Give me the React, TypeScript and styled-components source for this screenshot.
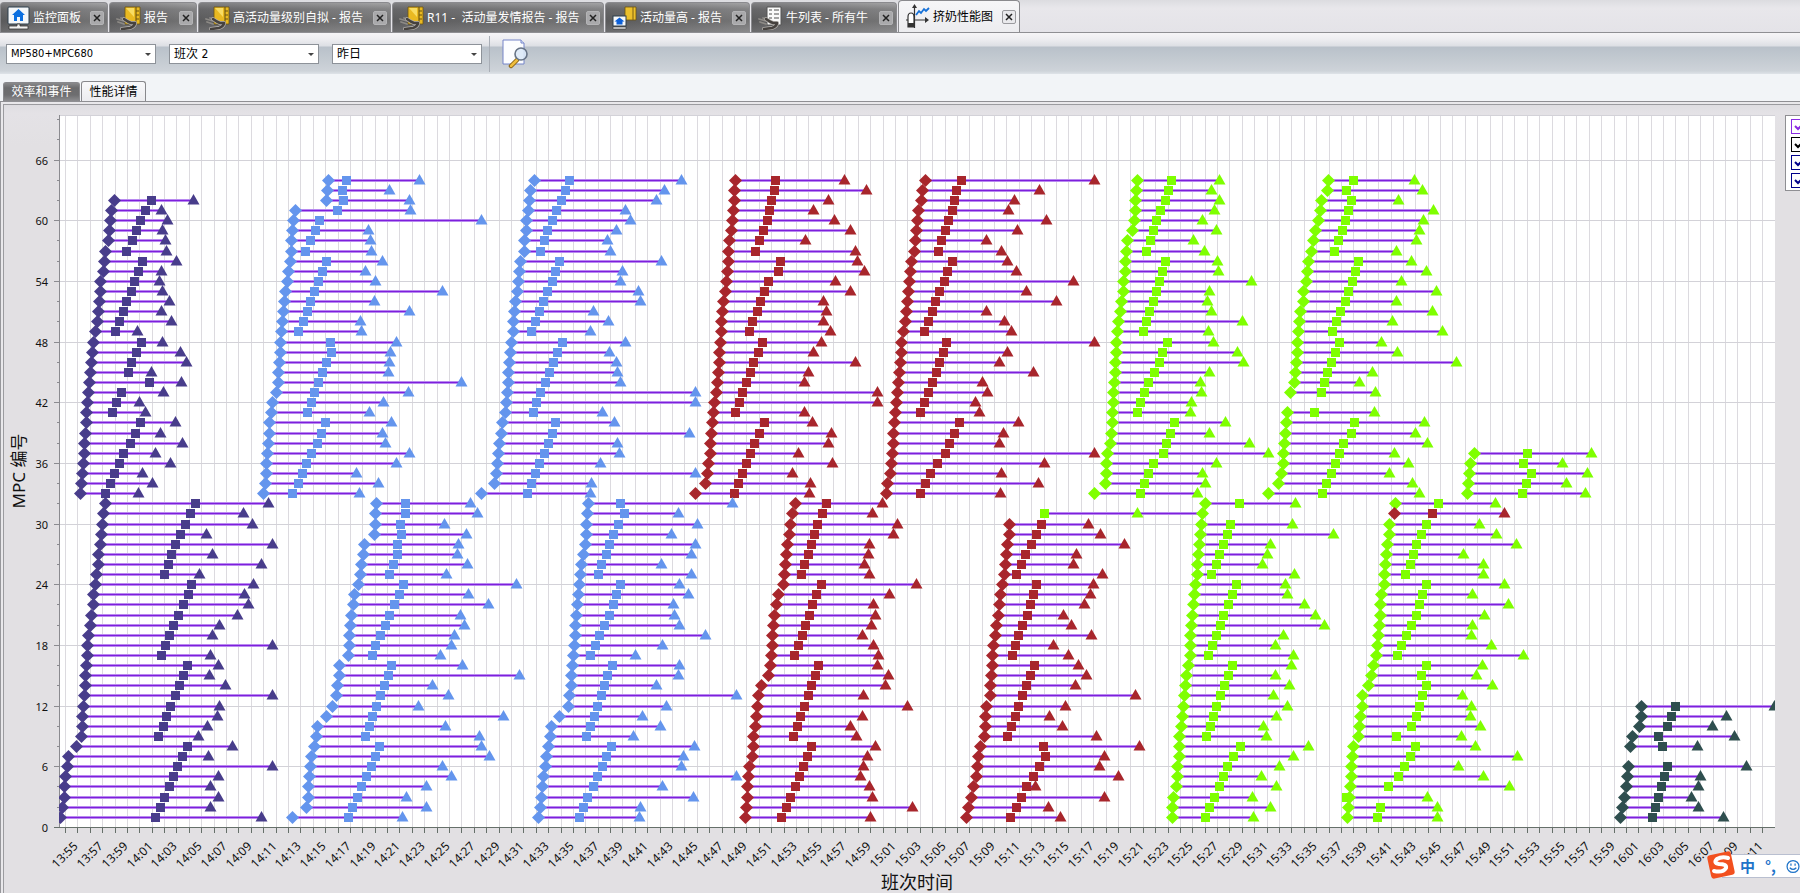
import React from 'react';
import styled, { createGlobalStyle, css } from 'styled-components';

const UI_FONT = '"Noto Sans", "Noto Sans CJK SC", sans-serif';

const GlobalStyle = createGlobalStyle`
  * { box-sizing: border-box; }
  body {
    margin: 0;
    background: #e2e0e3;
    font-family: ${UI_FONT};
    font-size: 12px;
    overflow-x: hidden;
  }
`;

/* ---------- chart data ---------- */

type Row = [number, number, number] | null;

interface Batch {
  color: string;
  origin: number;
  unit: number;
  top: number;
  rows: Row[];
}

const NAVY = '#483d8b';
const BLUE = '#6495ed';
const RED = '#a8262c';
const LIME = '#7fff00';
const SLATE = '#2f4f4f';

// Each entry is "start attach end", listed from the highest stall number down; "-" marks an empty stall.
const batch = (color: string, origin: number, unit: number, top: number, text: string): Batch => ({
  color,
  origin,
  unit,
  top,
  rows: text
    .trim()
    .split(/\s*,\s*/)
    .map((item) => (item === '-' ? null : (item.split(' ').map(Number) as [number, number, number]))),
});

const BATCHES: Batch[] = [
  batch(NAVY, 0, 3, 62, `343 455 581,335 437 484,332 421 502,329 409 488,325 397 497,316 379 499,314 427 530,311 415 484,
    301 403 478,301 394 488,298 379 508,295 370 484,292 358 514,286 347 412,280 424 488,277 409 542,274 394 560,271 385 454,
    268 448 544,265 364 490,262 349 418,259 337 436,259 421 526,256 406 482,253 391 547,252 370 466,250 358 512,247 343 427,
    244 331 457,241 316 415`),
  batch(BLUE, 0, 3, 64, `986 1040 1259,981 1027 1168,979 1031 1229,886 1012 1232,879 958 1445,877 946 1105,875 931 1111,875 916 1115,
    870 979 1147,865 967 1096,862 955 1126,856 943 1327,853 931 1123,849 922 1229,847 910 1081,845 895 1084,841 991 1189,
    841 994 1171,838 979 1168,836 967 1165,834 955 1384,829 943 1225,818 934 1150,814 922 1108,809 976 1174,808 964 1147,
    806 952 1156,803 934 1229,800 919 1189,799 907 1069,796 895 1135,791 877 1078`),
  batch(BLUE, 450, 3, 64, `254 358 694,241 346 643,238 334 619,236 319 526,230 307 541,228 292 499,223 283 472,223 271 481,
    211 328 634,208 316 517,205 307 511,203 292 565,197 280 571,193 268 430,190 256 475,190 244 421,183 337 526,180 322 478,
    178 310 499,176 298 502,175 286 511,172 271 736,169 259 736,167 250 457,156 316 493,154 307 718,148 295 502,145 283 508,
    142 268 451,139 256 736,133 244 424,95 232 421`),
  batch(RED, 450, 3, 64, `856 976 1183,854 973 1249,853 964 1135,851 958 1090,848 952 1153,845 940 1201,839 928 1066,836 916 1216,
    836 991 1222,832 985 1243,829 955 1156,826 943 1201,820 931 1120,816 922 1129,814 907 1120,814 898 1141,812 937 1114,
    809 925 1090,808 910 1216,805 901 1075,802 889 1063,799 877 1282,793 868 1282,790 856 1063,788 943 1087,785 928 1144,
    782 913 1135,781 901 1045,775 889 1147,772 877 1027,767 865 1081,736 853 1078`),
  batch(RED, 850, 3, 64, `226 334 733,217 319 568,214 313 493,205 307 475,202 295 589,198 286 502,195 274 409,192 265 454,
    183 307 472,181 292 499,178 283 670,175 268 529,171 256 619,169 247 409,166 235 463,159 223 484,154 289 733,153 280 472,
    151 268 448,148 259 550,145 247 397,142 235 412,139 223 376,136 211 388,133 328 505,130 313 460,129 298 448,126 286 733,
    124 262 583,121 241 454,112 226 565,109 211 451`),
  batch(LIME, 850, 3, 64, `862 964 1108,858 955 1084,856 946 1108,855 931 1093,853 919 1057,847 910 1099,832 901 1030,829 889 1063,
    827 946 1103,826 937 1105,821 928 1204,820 919 1078,814 910 1072,811 898 1084,804 889 1177,802 880 1075,800 952 1090,
    798 937 1162,796 928 1180,795 913 1078,793 895 1051,790 883 1054,790 871 1024,787 862 1021,787 973 1126,785 961 1078,
    781 949 1198,772 940 1255,769 910 1099,768 895 1057,766 883 1066,733 871 1042`),
  batch(LIME, 1250, 2.851, 64, `223 295 469,221 275 491,203 289 423,200 281 523,195 272 494,187 264 483,181 252 474,175 240 417,
    168 309 460,163 301 503,161 292 432,152 281 532,152 272 417,143 258 520,141 246 406,138 235 549,136 255 375,135 244 420,
    133 232 589,130 221 349,127 212 312,115 204 357,-,106 184 355,104 298 497,101 289 471,98 266 506,95 255 412,95 244 451,
    90 232 397,82 218 463,52 206 483`),
  batch(LIME, 1250, 2.851, 37, `640 791 974,628 780 891,626 802 962,623 788 902,620 777 956`),
  batch(NAVY, 0, 3, 32, `317 587 805,311 571 731,308 556 758,305 541 619,302 526 817,296 514 637,295 505 785,290 493 598,
    287 574 761,281 565 733,281 550 745,275 535 713,271 520 658,266 508 637,263 496 817,262 484 631,260 562 655,257 550 628,
    256 538 677,254 526 817,251 511 658,248 499 652,248 490 622,245 475 595,229 562 697,206 547 625,203 532 817,196 520 655,
    194 508 631,192 493 655,188 481 631,181 466 785`),
  batch(BLUE, 0, 3, 32, `1130 1216 1412,1127 1216 1433,1125 1201 1333,1123 1204 1399,1093 1192 1376,1090 1192 1372,1084 1180 1402,
    1082 1168 1340,1075 1211 1549,1064 1198 1406,1061 1183 1466,1054 1168 1382,1051 1156 1394,1048 1141 1363,1048 1126 1353,
    1046 1118 1321,1018 1174 1388,1017 1165 1559,1013 1153 1297,1009 1141 1346,997 1129 1255,979 1118 1511,952 1108 1337,
    949 1096 1438,943 1138 1445,935 1126 1469,932 1114 1327,928 1099 1355,926 1084 1279,924 1073 1219,919 1057 1279,878 1045 1207`),
  batch(BLUE, 450, 3, 32, `416 511 848,413 523 685,410 505 742,408 490 665,407 478 737,401 469 725,394 454 634,391 445 725,
    389 511 688,386 499 715,381 490 671,379 478 673,376 463 688,375 448 767,374 436 637,371 421 556,367 487 688,365 472 685,
    364 463 619,359 454 860,355 443 650,328 433 577,305 421 631,302 409 550,296 484 733,290 469 700,287 457 694,281 442 860,
    278 430 637,275 412 731,271 400 571,265 388 568`),
  batch(RED, 450, 3, 32, `1036 1129 1298,1027 1118 1267,1021 1102 1342,1018 1093 1330,1012 1084 1258,1010 1075 1256,1007 1063 1243,
    1003 1054 1258,1000 1114 1400,985 1099 1318,979 1087 1270,974 1078 1276,970 1066 1264,968 1057 1237,967 1045 1270,
    964 1033 1286,962 1105 1282,956 1096 1315,934 1084 1306,926 1075 1240,923 1063 1372,920 1051 1237,917 1042 1202,
    911 1030 1219,910 1084 1276,907 1072 1252,899 1060 1241,896 1048 1231,893 1036 1258,893 1021 1267,889 1009 1387,886 994 1261`),
  batch(RED, 850, 3, 30, `479 574 715,477 559 752,473 544 823,470 526 679,467 514 671,463 499 757,457 559 731,451 550 721,
    449 541 704,446 532 641,440 517 665,436 505 725,431 496 610,428 487 655,427 553 685,425 541 710,422 529 676,420 517 856,
    410 505 646,406 496 598,406 484 637,403 472 739,392 580 868,386 586 763,382 568 748,378 550 805,371 529 557,364 514 763,
    355 499 595,349 481 631`),
  batch(LIME, 850, 3, 32, `1067 1168 1336,1056 583 862,1054 1141 1327,1052 1132 1450,1049 1120 1262,1046 1108 1252,1043 1099 1238,
    1042 1084 1333,1036 1159 1306,1033 1147 1312,1030 1135 1363,1027 1120 1397,1024 1111 1423,1021 1099 1300,1021 1087 1276,
    1020 1075 1330,1016 1147 1325,1010 1135 1276,1007 1123 1319,1004 1111 1271,1001 1099 1312,997 1090 1279,994 1081 1241,
    989 1069 1249,989 1171 1376,987 1150 1331,983 1132 1288,982 1120 1235,980 1108 1279,971 1093 1208,968 1078 1262,967 1066 1210`),
  batch(LIME, 1250, 2.851, 32, `414 537 700,-,398 503 655,397 489 702,392 475 760,389 466 608,386 457 666,384 443 666,383 503 726,
    375 492 634,372 483 737,372 475 669,369 460 634,366 446 631,364 432 688,361 420 780,352 503 663,345 489 645,338 503 691,
    321 492 605,320 483 631,316 475 629,313 460 658,310 417 603,295 472 643,292 457 763,290 440 595,289 424 666,287 395 740,
    284 274 506,281 372 535,278 364 535`),
  batch(RED, 1250, 2.851, 31, `411 519 726`),
  batch(SLATE, 1250, 2.851, 12, `1116 1213 1495,1116 1202 1358,1110 1190 1318,1090 1164 1381,1084 1176 1275,-,1079 1190 1415,
    1077 1182 1284,1074 1173 1278,1069 1164 1258,1063 1156 1278,1056 1147 1350`),
];

const PLOT = { left: 59, right: 1775, top: 115, bottom: 827 };

const yOf = (value: number) => Math.floor(827.4 - (value * 91) / 9) + 0.5;
const minuteX = (i: number) => Math.floor(65.5 + i * 12.388) + 0.5;

const clock = (i: number) => {
  const total = 13 * 60 + 54 + i;
  return `${Math.floor(total / 60)}:${String(total % 60).padStart(2, '0')}`;
};

const MARKS = BATCHES.flatMap((b) =>
  b.rows.flatMap((row, i) => {
    if (!row) return [];
    const [start, attach, end] = row.map((v) => Math.floor(b.origin + v / b.unit) + 0.5);
    return [{ color: b.color, y: yOf(b.top - i), start, attach, end }];
  }),
);

const range = (n: number) => Array.from({ length: n }, (_, i) => i);

/* ---------- page structure ---------- */

const Page = styled.div`
  position: relative;
  min-height: 100vh;
  display: flex;
  flex-direction: column;
`;

const TabStrip = styled.nav`
  display: flex;
  align-items: flex-end;
  gap: 1px;
  height: 33px;
  background: linear-gradient(#dcdce0, #e8e7eb 8px, #e4e3e8);
  border-bottom: 1px solid #8f8f93;
  overflow: hidden;
`;

const Tab = styled.div<{ $active?: boolean; $width: number }>`
  display: flex;
  align-items: center;
  flex: 0 0 ${(p) => p.$width}px;
  height: ${(p) => (p.$active ? 32 : 30)}px;
  padding: 0 3px 0 6px;
  border: 1px solid #8a8a8e;
  border-bottom: 0;
  border-radius: 4px 4px 0 0;
  ${(p) =>
    p.$active
      ? css`
          background: linear-gradient(#f6f6f8, #ececef);
          color: #000;
        `
      : css`
          background: linear-gradient(90deg, rgba(60, 60, 62, 0.35), rgba(160, 160, 160, 0.2)),
            linear-gradient(#a4a4a6, #7d7d7f 6px, #6a6a6b 18px, #858587);
          color: #fff;
        `}
`;

const TabLabel = styled.button`
  display: flex;
  align-items: center;
  gap: 3px;
  flex: 1;
  min-width: 0;
  padding: 0;
  border: 0;
  background: none;
  color: inherit;
  font: 12px/18px ${UI_FONT};
  white-space: pre;
`;

const CloseButton = styled.button<{ $active?: boolean }>`
  display: grid;
  place-items: center;
  flex: none;
  width: 14px;
  height: 14px;
  padding: 0;
  border: 1px solid ${(p) => (p.$active ? '#9a9a9e' : '#b4b4b6')};
  border-radius: 2px;
  background: ${(p) => (p.$active ? '#e9e9ec' : '#a9a9ab')};
`;

const Toolbar = styled.div`
  display: flex;
  align-items: flex-start;
  height: 41px;
  padding: 3px 6px 0;
  background: linear-gradient(#f6f5f7, #eeeef1 6px, #dddfe4 13px, #b9c1ca 14px, #c3cad1 26px, #ced3d9 38px, #dfe3e8);
`;

const SelectBox = styled.div`
  position: relative;
  width: 150px;
  margin: 8px 13px 0 0;

  &::after {
    content: '';
    position: absolute;
    right: 5px;
    top: 9px;
    border: 3px solid transparent;
    border-top-color: #444;
    border-bottom: 0;
    pointer-events: none;
  }
`;

const Select = styled.select<{ $latin?: boolean }>`
  appearance: none;
  display: block;
  width: 100%;
  height: 20px;
  padding: 0 16px 0 4px;
  border: 1px solid #8d9299;
  border-radius: 0;
  background: #fff;
  color: #000;
  font: ${(p) => (p.$latin ? 11 : 12)}px/18px "DejaVu Sans Condensed", "Noto Sans CJK SC", sans-serif;
`;

const ToolbarDivider = styled.span`
  width: 1px;
  height: 36px;
  margin: 0 12px 0 -6px;
  background: #a9aeb6;
`;

const PreviewButton = styled.button`
  width: 30px;
  height: 32px;
  margin-top: 3px;
  padding: 0;
  border: 0;
  background: none;
`;

const SubTabStrip = styled.nav`
  display: flex;
  align-items: flex-end;
  gap: 1px;
  height: 28px;
  padding-left: 3px;
  background: #f2f4f7;
  border-bottom: 1px solid #8f8f93;
`;

const SubTab = styled.button<{ $active?: boolean; $width: number }>`
  width: ${(p) => p.$width}px;
  height: ${(p) => (p.$active ? 20 : 19)}px;
  padding: 0;
  border: 1px solid #88888c;
  border-bottom: 0;
  border-radius: 3px 3px 0 0;
  background: ${(p) =>
    p.$active ? 'linear-gradient(#f8f8fa, #ececef)' : 'linear-gradient(#8a8a8c, #6b6b6d 5px, #6e6e70 12px, #8d8d90)'};
  color: ${(p) => (p.$active ? '#000' : '#fff')};
  font: 12px/18px ${UI_FONT};
`;

const ChartFrame = styled.main`
  flex: 1;
  padding: 2px 0 0 2px;
  border-left: 1px solid #97979b;
  background: #e9e8eb;
`;

const ChartPanel = styled.div`
  display: flex;
  align-items: flex-start;
  border: solid #9b9b9f;
  border-width: 1px 0 0 1px;
  background: linear-gradient(#dedde1, #e4e2e6 8px, #e2e0e3 40px);
  overflow: hidden;
`;

const ChartSvg = styled.svg`
  display: block;
  flex: 1;
  min-width: 0;
  height: auto;
  font-family: ${UI_FONT};
`;

const Legend = styled.div`
  flex: 0 0 15px;
  display: flex;
  flex-direction: column;
  gap: 3px;
  height: 76px;
  margin-top: 10px;
  padding: 3px 0 0 5px;
  border: 1px solid #8f8f93;
  border-right: 0;
  background: #fff;
  overflow: hidden;
`;

const LegendCheck = styled.input<{ $color: string }>`
  appearance: none;
  flex: none;
  width: 15px;
  height: 15px;
  margin: 0;
  border: 1px solid ${(p) => p.$color};
  background: #fff
    url("data:image/svg+xml,%3Csvg xmlns='http://www.w3.org/2000/svg' viewBox='0 0 13 13'%3E%3Cpath d='M3 6l3 3 5-5' fill='none' stroke-width='2' stroke='${(p) =>
      encodeURIComponent(p.$color)}'/%3E%3C/svg%3E");
`;

const ImeBar = styled.aside`
  position: absolute;
  right: 0;
  top: 854px;
  display: flex;
  align-items: center;
  gap: 10px;
  width: 78px;
  height: 24px;
  padding-left: 18px;
  border: solid #b9bfd0;
  border-width: 1px 0;
  background: #fff;
  color: #1f74c9;
`;

const ImeLogo = styled.svg`
  position: absolute;
  left: -16px;
  top: -5px;
`;

const ImeText = styled.span`
  font: bold 15px/20px "Noto Sans CJK SC", sans-serif;
`;

/* ---------- icons ---------- */

const MonitorIcon = () => (
  <svg width="23" height="24" viewBox="0 0 23 24">
    <rect x="1" y="1" width="21" height="17" rx="1" fill="#f4f7fa" stroke="#2d3e4c" />
    <path d="M11.500 3l6.500 6h-2v6h-3v-4h-3v4H7V9H5z" fill="#0b6fe0" />
    <path d="M10 18h3v2h8v3H2v-3h8z" fill="#f1f1f1" stroke="#333" strokeWidth=".8" />
  </svg>
);

const Hand = () => (
  <g fill="none" strokeLinecap="round" strokeLinejoin="round">
    <path d="M1 13l7 2M2 16l6 2M5 12l5 2" stroke="#8d8a86" strokeWidth="1.800" />
    <path d="M8 13q4 3 7 4h4q0 3-5 5l-8 1" stroke="#b5b2ae" strokeWidth="4" />
    <path d="M8 13q4 3 7 4h4q0 3-5 5l-8 1" stroke="#46423f" strokeWidth="2.600" />
  </g>
);

const ReportIcon = () => (
  <svg width="25" height="24" viewBox="0 0 25 24">
    <path d="M9 1h15v17H9z" fill="#e9b921" stroke="#6d5310" strokeWidth=".8" />
    <path d="M20 1v17M20 5h3M20 9h3M20 13h3" stroke="#6b5412" strokeWidth="1.100" />
    <path d="M10 2h8v9z" fill="#f8dc63" />
    <Hand />
  </svg>
);

const ActivityIcon = () => (
  <svg width="25" height="24" viewBox="0 0 25 24">
    <path d="M13 1h11v13H13z" fill="#ecc02c" stroke="#6d5310" strokeWidth=".8" />
    <path d="M21 1v13" stroke="#7a6014" strokeWidth="1" />
    <rect x="1" y="10" width="13" height="10" fill="#f6f8fa" stroke="#2d3e4c" />
    <path d="M7.500 11.500l5 4h-2v3h-6v-3h-2z" fill="#0b5fd8" />
    <path d="M1 23h13v-2H1z" fill="#eee" stroke="#333" strokeWidth=".6" />
  </svg>
);

const ListIcon = () => (
  <svg width="25" height="24" viewBox="0 0 25 24">
    <path d="M9 1h14v18H9z" fill="#fafafa" stroke="#555" />
    <path d="M11 4h3M16 4h5M11 8h3M16 8h5M11 12h3M16 12h5" stroke="#888" strokeWidth="1.500" />
    <Hand />
  </svg>
);

const PerformanceIcon = () => (
  <svg width="25" height="26" viewBox="0 0 25 26">
    <path d="M9.500 24V3M1 16h21" stroke="#333" strokeWidth="1.200" fill="none" />
    <path d="M7 4l2.500-4L12 4zM20 13l4 3-4 3z" fill="#333" />
    <path d="M11 11l3-4 2 2 3-4 2 2 3-3" fill="none" stroke="#1671d8" strokeWidth="1.800" />
    <path d="M3 13q0-4 3-4t3 4v10H3z" fill="#fff" stroke="#333" strokeWidth="1.200" />
    <path d="M3 19h6v4H3z" fill="#333" />
  </svg>
);

const CloseIcon = () => (
  <svg width="8" height="8" viewBox="0 0 8 8">
    <path d="M1 1l6 6M7 1L1 7" stroke="#222" strokeWidth="1.500" />
  </svg>
);

const PreviewIcon = () => (
  <svg width="30" height="32" viewBox="0 0 30 32">
    <path d="M1 1h18l3 3v21H1z" fill="#fcfdff" stroke="#7484c8" />
    <path d="M19 1v3h3" fill="#dfe6fa" stroke="#7484c8" />
    <path d="M9 27l6-6" stroke="#8a6314" strokeWidth="4.500" strokeLinecap="round" />
    <path d="M9 27l6-6" stroke="#efbe3d" strokeWidth="2.500" strokeLinecap="round" />
    <circle cx="19" cy="15" r="6" fill="#dbe9f8" fillOpacity=".9" stroke="#667386" strokeWidth="1.600" />
  </svg>
);

const SmileIcon = () => (
  <svg width="17" height="17" viewBox="0 0 17 17" fill="none" stroke="#1f74c9" strokeWidth="1.500">
    <circle cx="8.500" cy="8.500" r="7.200" />
    <path d="M4.500 10q4 4 8 0M6 5v2.500M11 5v2.500" />
  </svg>
);

/* ---------- chart ---------- */

const Chart = () => (
  <ChartSvg viewBox="4 105 1781 788" role="img" aria-label="挤奶性能图">
    <defs>
      <clipPath id="plot-area">
        <rect x={PLOT.left} y={PLOT.top} width={PLOT.right - PLOT.left} height={PLOT.bottom - PLOT.top} />
      </clipPath>
    </defs>
    <rect x={PLOT.left} y={PLOT.top} width={PLOT.right - PLOT.left} height={PLOT.bottom - PLOT.top} fill="#fff" />

    <g stroke="#dcdadf">
      {range(138).map((i) => (
        <line key={i} x1={minuteX(i)} x2={minuteX(i)} y1={PLOT.top} y2={PLOT.bottom} />
      ))}
    </g>
    <g stroke="#d3d2d8">
      {range(12).map((i) => (
        <line key={i} x1={PLOT.left} x2={PLOT.right} y1={yOf(i * 6)} y2={yOf(i * 6)} />
      ))}
      <line x1={PLOT.left} x2={PLOT.right} y1={115.5} y2={115.5} />
    </g>

    <g stroke="#8b8b90">
      <line x1={59.5} x2={59.5} y1={PLOT.top} y2={PLOT.bottom} />
      {range(36).map((i) => (
        <line key={i} x1={(i * 2) % 6 ? 57 : 54} x2={59} y1={yOf(i * 2)} y2={yOf(i * 2)} />
      ))}
    </g>
    <g stroke="#66706a">
      <line x1={54} x2={PLOT.right} y1={827.5} y2={827.5} />
      {range(138).map((i) => (
        <line key={i} x1={minuteX(i)} x2={minuteX(i)} y1={828} y2={833} />
      ))}
    </g>

    <g fontSize="11" fill="#111" textAnchor="end">
      {range(12).map((i) => (
        <text key={i} x={48} y={yOf(i * 6) + 4}>
          {i * 6}
        </text>
      ))}
    </g>
    <g fontSize="12" fill="#111" textAnchor="end">
      {range(69).map((n) => {
        const x = minuteX(n * 2 + 1);
        return (
          <text key={n} transform={`translate(${x + 1} 847) rotate(-45)`}>
            {clock(n * 2 + 1)}
          </text>
        );
      })}
    </g>
    <g fontSize="18" fill="#111" textAnchor="middle">
      <text x={917} y={889}>
        班次时间
      </text>
      <text transform="translate(25 471) rotate(-90)" fontSize="17">
        MPC 编号
      </text>
    </g>

    <g clipPath="url(#plot-area)">
      {MARKS.map((m, i) => {
        const from = Math.min(m.start, m.attach, m.end);
        const to = Math.max(m.start, m.attach, m.end);
        return (
          <g key={i}>
            <rect x={from} y={m.y - 1.5} width={to - from} height={1} fill="#b98af0" />
            <rect x={from} y={m.y - 0.5} width={to - from} height={1} fill="#7e1fdc" />
            <rect x={from} y={m.y + 0.5} width={to - from} height={1} fill="#b98af0" />
          </g>
        );
      })}
      {MARKS.map((m, i) => (
        <g key={i} fill={m.color}>
          <path d={`M${m.start - 6.5} ${m.y}l6.500-6.500l6.500 6.500l-6.500 6.500z`} />
          <rect x={m.attach - 4.5} y={m.y - 4.5} width={9} height={9} />
          <path d={`M${m.end - 6} ${m.y + 4}l6-10.500l6 10.500z`} />
        </g>
      ))}
    </g>
  </ChartSvg>
);

const TABS = [
  { label: '监控面板', width: 108, icon: <MonitorIcon /> },
  { label: '报告', width: 88, icon: <ReportIcon /> },
  { label: '高活动量级别自拟 - 报告', width: 193, icon: <ReportIcon /> },
  { label: 'R11 -  活动量发情报告 - 报告', width: 212, icon: <ReportIcon /> },
  { label: '活动量高 - 报告', width: 145, icon: <ActivityIcon /> },
  { label: '牛列表 - 所有牛', width: 146, icon: <ListIcon /> },
  { label: '挤奶性能图', width: 122, icon: <PerformanceIcon />, active: true },
];

const FILTERS = [
  { name: '设备', value: 'MP580+MPC680', latin: true },
  { name: '班次', value: '班次 2' },
  { name: '日期', value: '昨日' },
];

const LEGEND = [
  { name: '时长', color: '#8a2be2' },
  { name: '开始', color: '#000000' },
  { name: '套杯', color: '#00008b' },
  { name: '结束', color: '#00008b' },
];

export default function App() {
  return (
    <Page>
      <GlobalStyle />
      <TabStrip>
        {TABS.map((tab) => (
          <Tab key={tab.label} $active={tab.active} $width={tab.width}>
            <TabLabel type="button">
              {tab.icon}
              {tab.label}
            </TabLabel>
            <CloseButton type="button" aria-label="关闭" $active={tab.active}>
              <CloseIcon />
            </CloseButton>
          </Tab>
        ))}
      </TabStrip>
      <Toolbar>
        {FILTERS.map((filter) => (
          <SelectBox key={filter.name}>
            <Select aria-label={filter.name} defaultValue={filter.value} $latin={filter.latin}>
              <option>{filter.value}</option>
            </Select>
          </SelectBox>
        ))}
        <ToolbarDivider />
        <PreviewButton type="button" aria-label="预览">
          <PreviewIcon />
        </PreviewButton>
      </Toolbar>
      <SubTabStrip>
        <SubTab type="button" $width={77}>
          效率和事件
        </SubTab>
        <SubTab type="button" $active $width={65}>
          性能详情
        </SubTab>
      </SubTabStrip>
      <ChartFrame>
        <ChartPanel>
          <Chart />
          <Legend>
            {LEGEND.map((item) => (
              <LegendCheck key={item.name} type="checkbox" defaultChecked aria-label={item.name} $color={item.color} />
            ))}
          </Legend>
        </ChartPanel>
      </ChartFrame>
      <ImeBar>
        <ImeLogo width="30" height="30" viewBox="0 0 30 30">
          <rect x="3" y="3" width="24" height="24" rx="3" fill="#f2501f" transform="rotate(-12 15 15)" />
          <path
            d="M22 8q-6-2-11 1q-4 4 2 5q8 0 7 4q-3 5-12 3"
            fill="none"
            stroke="#fff"
            strokeWidth="4"
            strokeLinecap="round"
          />
        </ImeLogo>
        <ImeText>中</ImeText>
        <ImeText>°,</ImeText>
        <SmileIcon />
      </ImeBar>
    </Page>
  );
}
